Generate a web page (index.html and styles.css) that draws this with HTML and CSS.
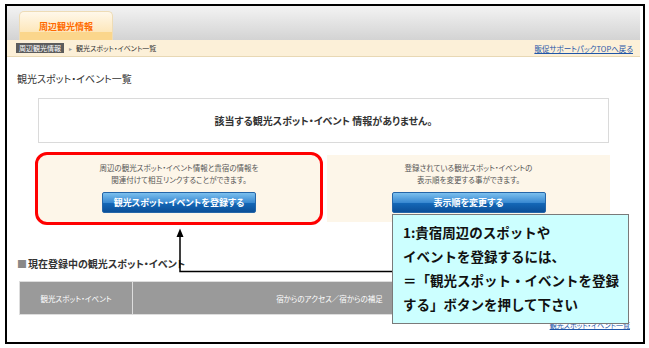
FILE: index.html
```html
<!DOCTYPE html>
<html lang="ja">

<head>
    <meta charset="UTF-8">
    <title>観光スポット・イベント一覧</title>
    <link rel="stylesheet" href="styles.css">
</head>

<body>
    <div class="frame">
        <div class="header">
            <div class="tab">周辺観光情報</div>
        </div>

        <div class="crumbs">
            <div class="crumb-path">
                <span class="badge">周辺観光情報</span>
                <span class="sep">▸</span>
                <span>観光スポット・イベント一覧</span>
            </div>
            <a class="back-link" href="#">販促サポートパックTOPへ戻る</a>
        </div>

        <h2 class="page-title">観光スポット・イベント一覧</h2>

        <div class="empty-box">該当する観光スポット・イベント 情報がありません。</div>

        <div class="actions">
            <div class="action marked">
                <p>周辺の観光スポット・イベント情報と貴宿の情報を<br>関連付けて相互リンクすることができます。</p>
                <button class="blue-btn">観光スポット・イベントを登録する</button>
            </div>
            <div class="action">
                <p>登録されている観光スポット・イベントの<br>表示順を変更する事ができます。</p>
                <button class="blue-btn">表示順を変更する</button>
            </div>
        </div>

        <h3 class="section-title"><span class="square">■</span>現在登録中の観光スポット・イベント</h3>

        <table class="spot-table">
            <tr>
                <th class="col-name">観光スポット・イベント</th>
                <th class="col-access">宿からのアクセス／宿からの補足</th>
                <th></th>
            </tr>
        </table>

        <div class="foot-link"><a href="#">観光スポット・イベント一覧</a></div>

        <!-- annotation: arrow from the button to the note -->
        <svg class="pointer" viewBox="7 6 636 336" width="636" height="336">
            <path d="M180 236 V271.5 H393" fill="none" stroke="#000" stroke-width="1.5"/>
            <polygon points="180,228.5 176.5,237 183.5,237" fill="#000"/>
        </svg>

        <div class="note">
            1:貴宿周辺のスポットや<br>
            イベントを登録するには、<br>
            ＝「観光スポット・イベントを登録<br>
            する」ボタンを押して下さい
        </div>
    </div>
</body>

</html>
```

FILE: styles.css
```css
* {
    margin: 0;
    padding: 0;
    box-sizing: border-box;
}

body {
    font-family: "Noto Sans CJK JP", sans-serif;
    background-color: #fff;
    color: #333;
}

.frame {
    position: relative;
    width: 640px;
    height: 340px;
    margin: 4px 0 0 5px;
    padding-right: 3px;
    border: 2px solid #000;
    overflow: hidden;
}

.header {
    height: 34px;
    padding: 5px 0 0 12px;
    background: linear-gradient(#f3f3f3, #d3d3d3);
}

.tab {
    width: 94px;
    height: 29px;
    display: flex;
    align-items: center;
    justify-content: center;
    border: 1px solid #eedcb6;
    border-bottom: none;
    border-radius: 5px 5px 0 0;
    background: linear-gradient(#fff8ea, #fde7bb 70%, #fbd68c 73%, #fbd68c);
    color: #ff6a00;
    font-size: 9px;
    font-weight: bold;
}

.crumbs {
    height: 17px;
    display: flex;
    align-items: center;
    justify-content: space-between;
    padding: 0 7px 0 9px;
    background-color: #fcf0d8;
    border-bottom: 1px solid #e8d8b4;
    font-size: 7px;
    font-feature-settings: "palt";
}

.crumb-path {
    display: flex;
    align-items: center;
    color: #333;
}

.badge {
    width: 48px;
    height: 10px;
    line-height: 10px;
    text-align: center;
    background-color: #5c5c5c;
    color: #fff;
}

.sep {
    margin: 0 4px 0 5px;
    color: #999;
    font-size: 6px;
}

.back-link {
    color: #1f56a8;
    font-size: 7.5px;
}

.page-title {
    margin: 16px 0 0 10px;
    font-size: 10px;
    line-height: 12px;
    font-weight: normal;
    font-feature-settings: "palt";
}

.empty-box {
    height: 45px;
    margin: 13px 31px 0;
    display: flex;
    align-items: center;
    justify-content: center;
    border: 1px solid #dadada;
    font-size: 10px;
    font-weight: bold;
    font-feature-settings: "palt";
}

.actions {
    display: grid;
    grid-template-columns: 282px 283px;
    gap: 7px;
    margin: 12px 0 0 31px;
}

.action {
    height: 67px;
    padding-top: 7px;
    text-align: center;
    background-color: #fdf6e9;
}

.action.marked {
    outline: 3px solid #f00;
    border-radius: 9px;
}

.action p {
    font-size: 7.5px;
    line-height: 12px;
    color: #555;
    font-feature-settings: "palt";
}

.blue-btn {
    width: 154px;
    height: 21px;
    margin-top: 6px;
    border: 1px solid #2566a8;
    border-radius: 2px;
    background: linear-gradient(#7cc0ee, #3a8ad2 50%, #1467b6 55%, #0b4f98);
    color: #fff;
    font-family: inherit;
    font-size: 9px;
    font-weight: bold;
    font-feature-settings: "palt";
}

.section-title {
    margin: 36px 0 0 10px;
    font-size: 10px;
    line-height: 12px;
    font-weight: bold;
    font-feature-settings: "palt";
}

.square {
    color: #888;
    margin-right: 1px;
}

.spot-table {
    width: 609px;
    margin: 11px 0 0 12px;
    border-collapse: collapse;
}

.spot-table th {
    height: 33px;
    background-color: #9a9a9a;
    border: 1px solid #ddd;
    color: #fff;
    font-size: 7.5px;
    font-weight: normal;
    font-feature-settings: "palt";
}

.col-name {
    width: 113px;
}

.col-access {
    width: 394px;
}

.foot-link {
    margin: 5px 10px 0 0;
    text-align: right;
    font-size: 7px;
    font-feature-settings: "palt";
}

.foot-link a {
    color: #1f56a8;
}

.pointer {
    position: absolute;
    left: 0;
    top: 0;
    pointer-events: none;
}

.note {
    position: absolute;
    left: 385px;
    top: 208px;
    width: 237px;
    height: 110px;
    padding: 5px 0 0 10px;
    background-color: #ccffff;
    border: 1px solid #7a7a7a;
    font-size: 13.5px;
    line-height: 24px;
    font-weight: bold;
    color: #111;
}
```
